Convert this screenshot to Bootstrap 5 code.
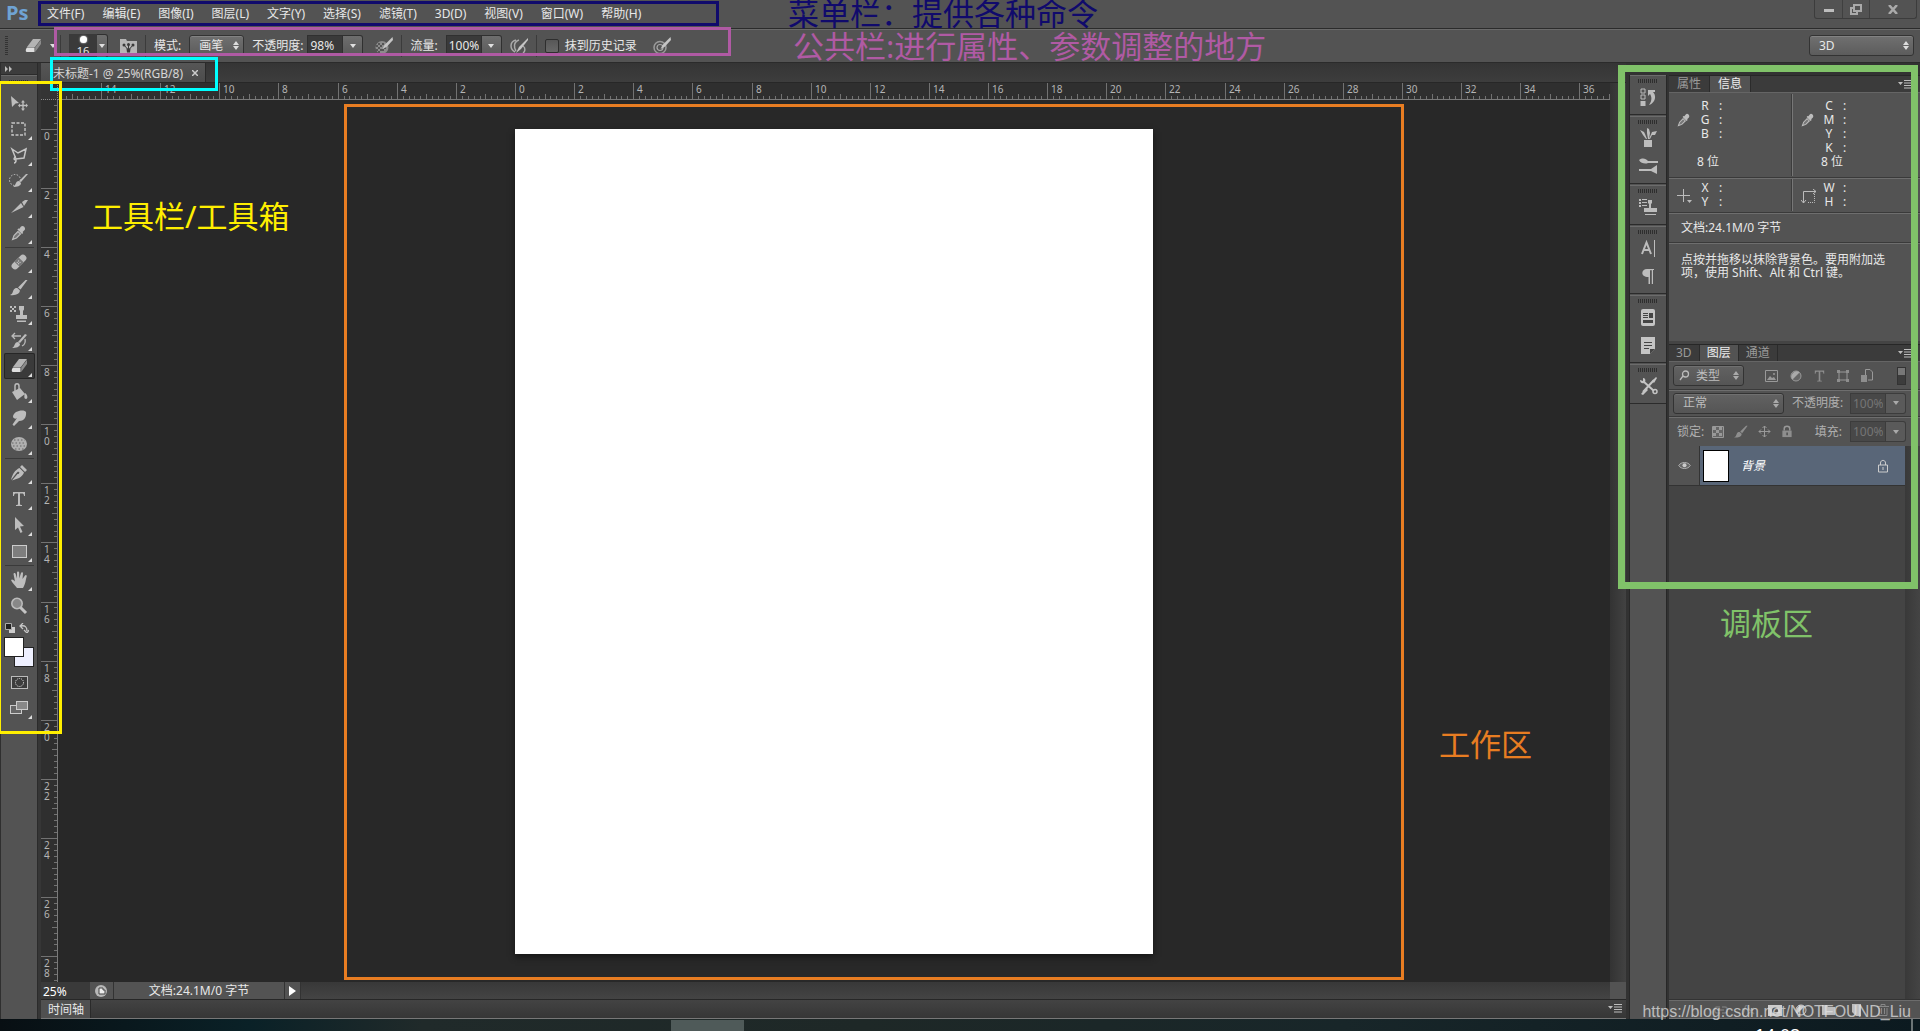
<!DOCTYPE html>
<html lang="zh-CN">
<head>
<meta charset="utf-8">
<meta name="viewport" content="width=device-width, initial-scale=1">
<title>Ps</title>
<link rel="stylesheet" href="https://cdn.jsdelivr.net/npm/bootstrap@5.3.0/dist/css/bootstrap.min.css">
<style>
:root{--face:#535353;--edge:#2b2b2b;--hi:#6a6a6a;--ink:#e8e8e8}
body{font:12px/14px "Noto Sans","Noto Sans CJK SC",sans-serif;color:var(--ink);background:#282828}
button,input,select{font:inherit;color:inherit}
button{background:none;border:0;padding:0}
svg{display:block;flex:none}
.ic{fill:#bdbdbd;stroke:none}
.bar-menu{height:28px;background:var(--face);padding-left:6px}
.ps-logo{font:bold 20px/26px "Open Sans","Noto Sans",sans-serif;color:#6fa3d3;width:41px}
.menu-list{gap:18px}
.menu-list button{line-height:26px;white-space:nowrap}
.win-ctl{border:1px solid #3c3c3c;border-top:0;height:19px;border-radius:0 0 3px 3px;margin-right:3px}
.win-ctl button{width:27px;height:18px;border-left:1px solid #404040}
.win-ctl button:first-child{border:0}
.win-ctl button:last-child{width:47px}
.bar-opt{height:35px;background:var(--face);border-top:1px solid var(--edge);border-bottom:1px solid var(--edge);box-shadow:inset 0 1px 0 var(--hi);padding:2px 6px 2px 5px}
.vsep{width:1px;height:22px;background:#3b3b3b}
.grip-v{width:3px;height:20px;background:repeating-linear-gradient(#333 0 1px,transparent 1px 2px)}
.grip-h{width:20px;height:4px;background:repeating-linear-gradient(90deg,#2e2e2e 0 1px,transparent 1px 2px)}
.ps-select{appearance:none;height:21px;padding:0 16px 0 9px;border:1px solid #333;border-radius:3px;box-shadow:inset 0 1px 0 #828282;line-height:18px;
 background:url("data:image/svg+xml,%3Csvg xmlns='http://www.w3.org/2000/svg' width='6' height='9'%3E%3Cpath fill='%23ddd' d='M3 0l3 4H0zM3 9l3-4H0z'/%3E%3C/svg%3E") no-repeat right 4px center,linear-gradient(#707070,#5c5c5c)}
.w-mode{width:55px}
.w-space{width:105px}
.ps-num{width:36px;height:21px;background:#3a3a3a;border:1px solid #303030;padding:0 2px;border-radius:0}
.ps-drop{width:20px;height:21px;border:1px solid #303030;border-left:0;border-radius:0 3px 3px 0;background:linear-gradient(#6e6e6e,#5a5a5a);display:flex;align-items:center;justify-content:center}
.ps-drop::after,.caret::after{content:"";display:block;border:3px solid transparent;border-top:4px solid #e0e0e0;border-bottom:0}
.brush-well{width:28px;height:24px;background:#3a3a3a;font-size:11px;line-height:12px;padding-top:2px}
.brush-dot{width:7px;height:7px;border-radius:50%;background:#fff;box-shadow:0 0 2px #fff;margin-bottom:2px}
.brush-drop{width:11px;height:24px}
.ps-check{appearance:none;width:14px;height:14px;border:1px solid #2e2e2e;border-radius:2px;background:linear-gradient(#575757,#686868);margin:0 6px 0 0}
.opt-icon{width:18px;height:18px}
.gap-l{margin-left:8px}
.gap-m{margin-left:12px}
.tool-col{width:38px;background:var(--face);border-left:1px solid #2f2f2f;border-right:1px solid var(--edge)}
.tool-head{height:12px;background:#3c3c3c;border-bottom:1px solid var(--edge);padding:3px 0 0 4px}
.tool-grip{height:15px;padding-top:4px;border-top:1px solid #696969}
.tool-b{width:31px;height:26px;position:relative;display:flex;align-items:center;justify-content:center}
.tool-b.more::after{content:"";position:absolute;right:3px;bottom:2px;border:2px solid transparent;border-right-color:#ddd;border-bottom-color:#ddd}
.tool-b.on{background:#3a3a3a;box-shadow:inset 0 0 0 1px #262626;border-radius:2px}
.tool-sep{width:29px;height:1px;background:#3a3a3a;margin:1px 0}
.swatches{width:30px;height:30px;position:relative;margin:4px 0 2px}
.swatches button{position:absolute;width:20px;height:20px;border:1px solid #222}
.swatches .sw-back{right:0;bottom:0;background:#eef0ff}.swatches .sw-fore{left:0;top:0;background:#fff}
.doc-col{background:#3a3a3a;border-left:3px solid #363636;min-width:0}
.tab-strip{height:20px;background:linear-gradient(#353535,#3d3d3d);border-bottom:1px solid #272727}
.doc-tab{background:linear-gradient(#565656,#4c4c4c);border-right:1px solid #2a2a2a;padding:1px 7px 0 12px;gap:9px;line-height:19px;color:#d6d6d6}
.ruler-h{height:17px;border-bottom:1px solid #7a7a7a}
.ruler-v{width:17px;border-right:1px solid #7a7a7a}
.ruler{background:#2f2f2f;overflow:hidden;flex:none}
.ruler text{fill:#b5b5b5;font:10px "Noto Sans",sans-serif}
.ruler path{stroke:#727272;fill:none;shape-rendering:crispEdges}
.corner{width:17px;height:17px;background:#343434;border-right:1px dotted #888;border-bottom:1px dotted #888;flex:none}
.stage{background:#282828;min-width:0}
.paper{width:638px;height:825px;background:#fff;box-shadow:0 3px 6px #161616}
.scroll-v{width:16px;background:linear-gradient(90deg,#333,#424242)}
.status{height:17px;background:linear-gradient(#383838,#444)}
.status .zoom-box{width:49px;background:#3a3a3a;border:0;padding:1px 2px 0;height:17px;color:#fff}
.status button{background:var(--face);border-right:1px solid #333;height:17px;padding-top:1px}
.status .size-info{width:171px}
.status .sb-corner{width:16px;background:var(--face)}
.time-strip{height:20px;border-top:1px solid #272727;border-bottom:1px solid #777;background:linear-gradient(#434343,#363636)}
.time-tab{background:#505050;border-right:1px solid #2a2a2a;padding:1px 6px 0 7px;line-height:18px}
.dock{width:38px;background:var(--face);border-left:1px solid #272727;border-right:1px solid #272727;margin-left:3px}
.dock section{border-top:1px solid #6c6c6c;border-bottom:1px solid #2b2b2b;padding-top:3px;margin-bottom:1px}
.dock button{height:28px;display:flex;align-items:center}
.dock .g-one{height:40px}.dock .g-two{height:68px}
.top-gap{height:12px}
.right{background:#323232}
.panel-col{width:251px;margin-left:2px;background:#444}
.ptabs{height:17px;background:#3b3b3b;border-top:1px solid #272727;color:#9a9a9a;padding-right:8px}
.ptabs button{padding:0 8px;border-right:1px solid #2b2b2b;line-height:16px}
.ptabs.tight{margin-top:3px}
.ptabs.tight button{padding:0 7px}
.ptabs button.on{background:var(--face);color:#eee}
.panel{background:var(--face);border-top:1px solid #656565}
.info-row{padding-right:5px}
.info-cell{height:82px;padding:5px 0 0 8px;margin:1px 0}
.info-cell.small-cell{height:32px;padding-top:2px}
.info-cell + .info-cell{border-left:1px solid #777;box-shadow:-1px 0 0 #3c3c3c}
.info-cell dl{margin:0;width:42px;display:grid;grid-template-columns:14px 1fr;column-gap:6px;text-align:center;align-content:start}
.info-cell dt,.info-cell dd{margin:0;font-weight:400;line-height:14px;height:14px}
.info-cell dd{text-align:left;padding-left:1px}
.info-cell .depth{grid-column:1/3;text-align:left;white-space:nowrap;margin-left:-1px}
.info-cell .lead-ic{width:21px;padding-top:14px}
.rule{border-top:1px solid #3a3a3a;box-shadow:inset 0 1px 0 #6e6e6e}
.doc-size{height:30px;padding:8px 12px}
.hint{height:99px;padding:10px 28px 0 12px;line-height:13px;margin:0}
.dim{color:#b0b0b0}
.lrow{height:27px;padding:0 14px 0 4px}
.lrow.tall{height:30px}
.lrow .ps-select{color:#bdbdbd;box-shadow:inset 0 1px 0 #707070;background-image:url("data:image/svg+xml,%3Csvg xmlns='http://www.w3.org/2000/svg' width='6' height='9'%3E%3Cpath fill='%23aaa' d='M3 0l3 4H0zM3 9l3-4H0z'/%3E%3C/svg%3E"),linear-gradient(#626262,#555)}
.lrow .ps-num{background:#484848;color:#757575;border-color:#3c3c3c}
.lrow .ps-drop{border-color:#3c3c3c;background:#5a5a5a}
.lrow .ps-drop::after{border-top-color:#aaa}
.lrow .ic{fill:#8e8e8e}
.filters{gap:12px;margin-left:21px}
.locks{gap:10px;margin-left:8px}
.w-type{width:71px;padding-left:22px}
.w-blend{width:111px}
.find{position:absolute;left:6px;top:5px}
.toggle-sw{width:9px;height:18px;background:linear-gradient(#777 0 45%,#3c3c3c 45%);border:1px solid #333}
.layer{height:40px;border-bottom:1px solid #333}
.eye{width:31px;background:var(--face);border-right:1px solid #333;display:flex;align-items:center;justify-content:center}
.layer .eye{background:var(--face);border-right:1px solid #333}
.layer-body{background:#596678;padding:0 16px 0 3px}
.thumb{width:26px;height:32px;background:#fff;border:1px solid #000}
.sb{width:15px;background:linear-gradient(90deg,#393939,#444)}
.foot{height:20px;background:var(--face);border-top:1px solid #333;border-bottom:1px solid #777;box-shadow:inset 0 1px 0 #6c6c6c;padding:2px 30px 0 0;gap:13px}
.taskbar{height:12px;background:linear-gradient(90deg,#080f13,#0a2127 13%,#202a2a 22%,#1e2827 45%,#182629 70%,#0c1a20);overflow:hidden}
.task-on{width:73px;height:11px;background:#4f5a59;margin:1px 0 0 671px}
.clock{font:18px/18px "Liberation Sans",sans-serif;margin:8px 111px 0 0;color:#fff}
.peek{width:2px;background:#6c7577;margin-right:7px}
.note{position:absolute;pointer-events:none;z-index:5}
.note-t{font:31px/30px "Noto Sans","Noto Sans CJK SC",sans-serif;white-space:nowrap}
.n-menu{left:38px;top:1px;width:681px;height:25px;border:3px solid #100a6c}
.t-menu{left:788px;top:-2px;color:#100a6c}
.n-opt{left:54px;top:27px;width:677px;height:29px;border:3px solid #b05aa4}
.t-opt{left:793px;top:31px;color:#b05aa4}
.n-tab{left:50px;top:57px;width:168px;height:34px;border:3px solid #0ff}
.n-tool{left:-2px;top:81px;width:64px;height:653px;border:3px solid #ffef00}
.t-tool{left:92px;top:201px;color:#ffef00}
.n-work{left:286px;top:4px;width:1060px;height:876px;border:3px solid #e87d22}
.t-work{right:388px;top:729px;color:#e87d22}
.n-panel{right:2px;top:65px;width:300px;height:524px;border:7px solid #80c269}
.t-panel{right:107px;top:608px;color:#80c269}
.water{right:9px;bottom:9px;font:16px/20px "Liberation Sans",Arial,sans-serif;color:rgba(225,225,225,.75)}
.fit{min-height:0;min-width:0}
</style>
<script src="https://cdn.jsdelivr.net/npm/bootstrap@5.3.0/dist/js/bootstrap.bundle.min.js"></script>
</head>
<body class="vh-100 overflow-hidden d-flex flex-column position-relative">

<svg width="0" height="0" class="position-absolute" aria-hidden="true">
 <symbol id="dropper" viewBox="0 0 16 16"><path d="M10 1.600c2-2 5.200 1.200 3.600 3.400l-2 2 .6 1-1.200 1-4.600-4.400 1-1.200 1 .4z"/><path d="M7 6.500 3 10.500 1.600 14.400 5.500 13 9.500 9z" fill="#777" stroke="#bdbdbd" stroke-width="1.200"/></symbol>
 <symbol id="brush" viewBox="0 0 18 18"><path d="M17.500 1 10.500 10.500 8 8.500 15.500 1z"/><path d="M7.300 9 9.800 11.300c.5 3.400-4 5.500-9.800 4.700 3-1 2.500-3 3.700-5.200.9-1.600 2.400-2.200 3.600-1.800z"/></symbol>
 <symbol id="eraser" viewBox="0 0 18 18"><path d="M9 2h8l-6 8H3z" fill="#b4b4b4"/><path d="M3 10.600h7.500V15H2.600c-1.400-.6-1-3 .4-4.400z" fill="#dedede"/><path d="M11.200 10.600 17 2.800V7l-5.800 8z" fill="#8c8c8c"/></symbol>
 <symbol id="stamp" viewBox="0 0 18 18"><path d="M9 1h5v3.500l-1 1.500v4h4v4H6v-4h4V6L9 4.500zM7 15.500h9V17H7z"/><path d="M0 1h2v2H0zM4 1h2v2H4zM2 3h2v2H2zM0 5h2v2H0zM4 5h2v2H4z"/></symbol>
 <symbol id="pressure" viewBox="0 0 18 18"><circle cx="7" cy="10.500" r="6.500" fill="#8c8c8c"/><path d="M3 6h2v2H3zM7 6h2v2H7zM1 8h2v2H1zM5 8h2v2H5zM3 10h2v2H3zM7 12h2v2H7zM1 12h2v2H1zM5 12h2v2H5zM3 14h2v2H3zM9 10h2v2H9z" fill="#555"/><path d="M17.500 0 9.500 8l-2 4 4-2L18 3z" fill="#c5c5c5"/></symbol>
 <symbol id="target" viewBox="0 0 18 18"><circle cx="7" cy="10.500" r="6" fill="none" stroke="#9a9a9a" stroke-width="1.500"/><circle cx="7" cy="10.500" r="3" fill="none" stroke="#aaa" stroke-width="1.200"/><path d="M17.500 0 9.500 8l-2 4 4-2L18 3z" fill="#c5c5c5"/></symbol>
 <symbol id="lock" viewBox="0 0 12 14"><path d="M1 6h10v7H1z"/><path d="M3 6V4c0-3.500 6-3.500 6 0v2" fill="none" stroke="#999" stroke-width="1.600"/><path d="M5.400 8h1.400v3H5.400z" fill="#444"/></symbol>
 <symbol id="pmenu" viewBox="0 0 14 9"><path d="M0 2h5L2.500 5zM6 0h8v1H6zM6 2.500h8v1H6zM6 5h8v1H6zM6 7.500h8v1H6z"/></symbol>
</svg>

<header>
 <nav class="bar-menu d-flex">
  <span class="ps-logo">Ps</span>
  <div class="menu-list d-flex flex-grow-1">
   <button>文件(F)</button><button>编辑(E)</button><button>图像(I)</button><button>图层(L)</button><button>文字(Y)</button><button>选择(S)</button><button>滤镜(T)</button><button>3D(D)</button><button>视图(V)</button><button>窗口(W)</button><button>帮助(H)</button>
  </div>
  <div class="win-ctl d-flex">
   <button aria-label="最小化"><svg class="ic mx-auto" width="10" height="10"><path d="M0 5h10v3H0z"/></svg></button>
   <button aria-label="还原"><svg class="mx-auto" width="12" height="11" fill="none" stroke="#aaa" stroke-width="2"><path d="M4 1h7v6H4zM7 7v3H1V4h3"/></svg></button>
   <button aria-label="关闭"><svg class="mx-auto" width="10" height="9" stroke="#aaa" stroke-width="2.500"><path d="M1 0l8 9M9 0L1 9"/></svg></button>
  </div>
 </nav>
 <div class="bar-opt d-flex align-items-center">
  <span class="grip-v"></span>
  <svg class="ic ms-3" width="18" height="18"><use href="#eraser"/></svg>
  <button class="caret ps-1 ms-1" aria-label="工具预设"></button>
  <span class="vsep ms-1"></span>
  <div class="brush-well gap-l d-flex flex-column align-items-center"><span class="brush-dot"></span>16</div><button class="ps-drop brush-drop" aria-label="画笔预设"></button>
  <svg class="gap-m" width="17" height="16"><path d="M0 1h6l1 2h10v13H0z" fill="#b5b5b5"/><g fill="#3a3a3a"><circle cx="4" cy="7" r="1.500"/><circle cx="8.500" cy="6.500" r="1.500"/><circle cx="13" cy="7" r="1.500"/><path d="M6.500 10.500h4l-.5 4H7z"/><path d="M4 7l3.500 4M8.500 6v5M13 7l-3.500 4" stroke="#3a3a3a"/></g></svg>
  <span class="vsep mx-2"></span>
  <label for="mode">模式:</label><select id="mode" class="ps-select w-mode gap-l"><option>画笔</option></select>
  <label for="opac" class="ms-2 me-1">不透明度:</label><input id="opac" class="ps-num" value="98%"><button class="ps-drop" aria-label="不透明度"></button>
  <svg class="opt-icon gap-m"><use href="#pressure"/></svg>
  <span class="vsep mx-2"></span>
  <label for="flow" class="me-2">流量:</label><input id="flow" class="ps-num" value="100%"><button class="ps-drop" aria-label="流量"></button>
  <svg class="opt-icon gap-l" viewBox="0 0 18 18"><path d="M6 3c-7 2-6 9-1 12M9 3c-6 2-5 8-3 11M13 9c3 2 2 6 0 7" fill="none" stroke="#aaa" stroke-width="1.500"/><path d="M18 1 9 10l-3 6 5-4 7-9z" fill="#c5c5c5"/></svg>
  <span class="vsep mx-2"></span>
  <input type="checkbox" class="ps-check" id="hist"><label for="hist">抹到历史记录</label>
  <svg class="opt-icon ms-3"><use href="#target"/></svg>
  <select class="ps-select w-space ms-auto" aria-label="工作区"><option>3D</option></select>
 </div>
</header>

<main class="d-flex flex-grow-1 fit">
 <aside class="tool-col flex-shrink-0">
  <div class="tool-head"><svg class="ic" width="8" height="6"><path d="M0 0l3 3-3 3zM4 0l3 3-3 3z"/></svg></div>
  <div class="tool-grip d-flex justify-content-center"><span class="grip-h"></span></div>
  <div class="d-flex flex-column align-items-center">
   <button class="tool-b" aria-label="移动"><svg class="ic" width="18" height="16"><path d="M1 1l8 7-3.500.5L2 12z"/><path d="M13 5l2 2.500h-1.300V9.700H16V8.400L18 10.500 16 12.500v-1.300h-2.300v2.300H15L13 16l-2-2.500h1.300v-2.300H10v1.300L8 10.500l2-2.100v1.300h2.300V7.500H11z"/></svg></button>
   <button class="tool-b more" aria-label="选框"><svg width="16" height="15"><rect x="1" y="1" width="13" height="12" fill="none" stroke="#c6c6c6" stroke-width="1.400" stroke-dasharray="3 1.500"/></svg></button>
   <button class="tool-b more" aria-label="套索"><svg width="18" height="17"><path d="M2 2l6 4 8-4-2 9-8 1zM6 10c-2 0-3 3 0 3 0 2-1 3-2 3" fill="none" stroke="#c6c6c6" stroke-width="1.500"/></svg></button>
   <button class="tool-b more" aria-label="快速选择"><svg width="20" height="16" class="ic"><circle cx="6" cy="7" r="5.500" fill="none" stroke="#c6c6c6" stroke-dasharray="1.500 1.500"/><path d="M19 1l-7 8-2-1 7-7zM10 8l2 2c0 3-4 4-8 4 3-1 2-6 6-6z"/></svg></button>
   <button class="tool-b more" aria-label="切片"><svg class="ic" width="18" height="16"><path d="M12 3l3-2 3 0-4 6zM11 4l2.500 4L1 14z"/></svg></button>
   <button class="tool-b more" aria-label="吸管"><svg class="ic" width="16" height="16"><use href="#dropper"/></svg></button>
   <span class="tool-sep"></span>
   <button class="tool-b more" aria-label="修复"><svg width="18" height="18"><g transform="rotate(-45 9 9)"><rect x="0" y="5.500" width="18" height="7" rx="3.500" fill="#bcbcbc"/><path d="M6 5.500h6v7H6z" fill="#777"/><path d="M7 8h4M7 10h4" stroke="#ddd" stroke-dasharray="1 1"/></g></svg></button>
   <button class="tool-b more" aria-label="画笔"><svg class="ic" width="18" height="18"><use href="#brush"/></svg></button>
   <button class="tool-b more" aria-label="图章"><svg class="ic" width="18" height="18"><use href="#stamp"/></svg></button>
   <button class="tool-b more" aria-label="历史画笔"><svg class="ic" width="18" height="18"><path d="M17 4l-7 8-2-1 7-8zM8 11l2 2c0 3-4 4-8 4 3-1 2-6 6-6z"/><path d="M3 5h8M5 2L2 5l3 3M15 8c1 4-1 6-3 7" fill="none" stroke="#bbb" stroke-width="1.300"/></svg></button>
   <button class="tool-b more on" aria-label="橡皮擦"><svg width="18" height="18"><use href="#eraser"/></svg></button>
   <button class="tool-b more" aria-label="油漆桶"><svg class="ic" width="18" height="18"><path d="M2 9l8-4 5 6-8 6zM15 10c3 2 3 6 1 6s-2-3-1-6z"/><path d="M5 9V3c0-3 4-3 4 0v5" fill="none" stroke="#bbb" stroke-width="1.500"/></svg></button>
   <button class="tool-b more" aria-label="涂抹"><svg class="ic" width="18" height="18"><path d="M3 8c0-7 12-8 13-5 .6 4-1 9-7 9l-5 5-1.500-1.500L7 9c-1 1-3 1-4-1z"/></svg></button>
   <button class="tool-b more" aria-label="海绵"><svg width="18" height="16"><ellipse cx="9" cy="8" rx="8" ry="7" fill="#b0b0b0"/><g stroke="#666" stroke-dasharray="1.500 2"><path d="M4 4h11M2 7h14M3 10h13M5 13h9"/></g></svg></button>
   <span class="tool-sep"></span>
   <button class="tool-b more" aria-label="钢笔"><svg class="ic" width="18" height="18"><path d="M12 1l5 5-2 2-5-5zM9.500 4l4.500 4.500c-2 5-6 6-12 8L7.500 10l1 0 1-1.500-1.500-1-1.500 1.500-5.500 7C2.500 10 5 6 9.500 4z"/></svg></button>
   <button class="tool-b more" aria-label="文字"><svg class="ic" width="14" height="14"><path d="M1 0h12v4h-1c0-2-1-2.500-2-2.500H8V12c0 .8.500 1 2 1v1H4v-1c1.500 0 2-.2 2-1V1.500H4C3 1.500 2 2 2 4H1z"/></svg></button>
   <button class="tool-b more" aria-label="路径选择"><svg class="ic" width="11" height="17"><path d="M1 0l9 9-4 .5L8.500 15l-2 1L4 10.500 1 13z"/></svg></button>
   <button class="tool-b more" aria-label="矩形"><svg width="15" height="13"><rect x=".5" y=".5" width="14" height="12" fill="#7e7e7e" stroke="#ccc"/></svg></button>
   <span class="tool-sep"></span>
   <button class="tool-b more" aria-label="抓手"><svg class="ic" width="18" height="18"><path d="M7 17c-2-3-5-5-6-8 1-1.500 3 0 4 1.500L3.500 3c0-1.500 2-1.500 2.200 0L7 7.500V1.500c0-1.500 2-1.500 2.200 0v6L11 2c.4-1.400 2.200-1 2 .5L12.500 8 15 4.500c.8-1.200 2.200-.2 1.700 1C15.500 9 16 12 13 17z"/></svg></button>
   <button class="tool-b" aria-label="缩放"><svg width="18" height="18"><circle cx="7" cy="6.500" r="5.200" fill="#888" stroke="#bbb" stroke-width="1.600"/><path d="M10.500 10.500l5.500 5.500" stroke="#c4c4c4" stroke-width="3"/></svg></button>
   <div class="d-flex justify-content-between w-100 px-1 mt-1"><svg width="10" height="10"><path d="M4 4h6v6H4z" fill="#ccc"/><path d="M.5.500h6v6h-6z" fill="#222" stroke="#aaa"/></svg><svg class="me-1" width="10" height="10"><path d="M2 3c4-1 6 1 6 5M4 0L1 3l3 3M5 7l3 3 2-3" fill="none" stroke="#c6c6c6" stroke-width="1.300"/></svg></div>
   <div class="swatches"><button class="sw-back" aria-label="背景色"></button><button class="sw-fore" aria-label="前景色"></button></div>
   <button class="tool-b" aria-label="快速蒙版"><svg width="17" height="13"><rect x=".5" y=".5" width="16" height="12" fill="#3c3c3c" stroke="#bbb"/><circle cx="8.500" cy="6.500" r="4" fill="none" stroke="#eee" stroke-dasharray="1 1"/></svg></button>
   <button class="tool-b more" aria-label="屏幕模式"><svg width="18" height="14"><rect x=".5" y="4.500" width="11" height="8" fill="#666" stroke="#ccc"/><rect x="6.500" y=".5" width="11" height="8" fill="#888" stroke="#ccc"/></svg></button>
  </div>
 </aside>

 <section class="doc-col d-flex flex-column flex-grow-1">
  <div class="tab-strip d-flex"><div class="doc-tab d-flex"><span>未标题-1 @ 25%(RGB/8)</span><button aria-label="关闭文档"><svg width="6" height="6" stroke="#ccc" stroke-width="1.500"><path d="M0 0l6 6M6 0L0 6"/></svg></button></div></div>
  <div class="d-flex flex-grow-1 fit">
   <div class="d-flex flex-column flex-grow-1 fit">
    <div class="d-flex"><span class="corner"></span><div class="ruler ruler-h flex-grow-1 fit"><svg id="rh" width="100%" height="16"></svg></div></div>
    <div class="d-flex flex-grow-1 fit">
     <div class="ruler ruler-v"><svg id="rv" width="16" height="100%"></svg></div>
     <div class="stage flex-grow-1 d-flex align-items-center justify-content-center position-relative">
      <div class="paper flex-shrink-0" id="paper"></div>
      <div class="note n-work"></div>
     </div>
    </div>
   </div>
   <div class="scroll-v"></div>
  </div>
  <div class="status d-flex">
   <input class="zoom-box" value="25%" aria-label="缩放比例">
   <button class="px-1" aria-label="导出"><svg width="15" height="12"><circle cx="7" cy="6" r="6" fill="#b8b8b8"/><path d="M5 3h4v2h2v4H5z" fill="#eee" stroke="#444"/></svg></button>
   <button class="size-info">文档:24.1M/0 字节</button>
   <button class="px-1" aria-label="状态菜单"><svg width="7" height="10"><path d="M0 0l7 5-7 5z" fill="#fff"/></svg></button>
   <span class="sb-corner ms-auto"></span>
  </div>
  <div class="time-strip d-flex"><button class="time-tab">时间轴</button><svg class="ic ms-auto me-1 mt-1" width="14" height="9"><use href="#pmenu"/></svg></div>
 </section>

 <div class="right d-flex flex-shrink-0">
  <div class="d-flex flex-column"><div class="top-gap"></div>
  <nav class="dock flex-grow-1 d-flex flex-column">
   <section class="g-one d-flex flex-column align-items-center"><span class="grip-h"></span><button aria-label="历史记录"><svg class="ic" width="16" height="18"><path d="M1 1h4v4H1zM1 7h4v4H1z" fill="none" stroke="#bbb"/><path d="M.5 13h5v5h-5zM8 2h7v2l-2 0c4 4 2 11-4 13 3-4 3-8 1-11L8 8z"/></svg></button></section>
   <section class="g-two d-flex flex-column align-items-center"><span class="grip-h"></span><button aria-label="画笔预设"><svg class="ic" width="17" height="20"><path d="M4 12h8v7H4zM0 2l4 2 1 2 2 5H6L3 7zM7 0l2 1 1 4-1 6H8L7 5zM12 4l5-1-2 4-3 0-2 4H9z"/></svg></button><button aria-label="画笔"><svg class="ic" width="19" height="18"><path d="M0 3c4-3 7-1 9 1h10v2H9C7 7 2 7 0 3zM0 12h12l6-4v9l-6-3H0z"/></svg></button></section>
   <section class="g-one d-flex flex-column align-items-center"><span class="grip-h"></span><button aria-label="仿制源"><svg class="ic" width="19" height="18"><path d="M0 1h2v2H0zM3 1h5v1H3zM0 4h2v2H0zM3 4h5v1H3zM0 7h2v2H0zM3 7h5v1H3zM9 2h4v3l-1 1v4h6v4H5v-4h5V6L9 5zM6 16h11v1H6z"/></svg></button></section>
   <section class="g-two d-flex flex-column align-items-center"><span class="grip-h"></span><button aria-label="字符"><svg width="15" height="17"><path d="M1 14L5.500 2.500 10 14M2.500 10h6" fill="none" stroke="#bdbdbd" stroke-width="2"/><path d="M13.500 0v17" stroke="#bdbdbd"/></svg></button><button aria-label="段落"><svg class="ic" width="12" height="15"><path d="M5 0h7v1h-1v14h-1.200V1.200H8V15H6.500V8C-2 8-1 0 5 0z"/></svg></button></section>
   <section class="g-two d-flex flex-column align-items-center"><span class="grip-h"></span><button aria-label="注释"><svg width="14" height="17"><rect width="14" height="17" rx="2" fill="#c4c4c4"/><path d="M2 4h5v1H2zM2 6h5v1H2zM2 8h5v1H2zM8 4h4v5H8zM2 11h10v3H2z" fill="#444"/></svg></button><button aria-label="便笺"><svg width="14" height="17"><path d="M0 0h14v12l-5 5H0z" fill="#c4c4c4"/><path d="M3 5h8v1H3zM3 8h8v1H3zM3 11h5v1H3zM9 17v-5h5z" fill="#444"/></svg></button></section>
   <section class="g-one d-flex flex-column align-items-center"><span class="grip-h"></span><button aria-label="工具预设"><svg width="19" height="18"><path d="M4 4l11 10M15 3L4 15" stroke="#c4c4c4" stroke-width="2"/><path d="M1 3c0 4 4 4 5 2s0-4-2-4v3zM2 17l5-6 2 2-5 5zM13 4l4-4 1 1-3 5z" fill="#c4c4c4"/><circle cx="16" cy="14.500" r="2" fill="none" stroke="#c4c4c4" stroke-width="1.500"/></svg></button></section>
  </nav></div>
  <div class="d-flex flex-column"><div class="top-gap"></div>
  <div class="panel-col flex-grow-1 d-flex flex-column">
   <div class="ptabs d-flex"><button>属性</button><button class="on">信息</button><svg class="ic ms-auto mt-1" width="14" height="9"><use href="#pmenu"/></svg></div>
   <div class="panel">
    <div class="info-row d-flex">
     <div class="info-cell d-flex w-50"><span class="lead-ic"><svg class="ic" width="14" height="14"><use href="#dropper"/></svg></span><dl><dt>R</dt><dd>:</dd><dt>G</dt><dd>:</dd><dt>B</dt><dd>:</dd><dt>&nbsp;</dt><dd></dd><dt class="depth">8 位</dt></dl></div>
     <div class="info-cell d-flex w-50"><span class="lead-ic"><svg class="ic" width="14" height="14"><use href="#dropper"/></svg></span><dl><dt>C</dt><dd>:</dd><dt>M</dt><dd>:</dd><dt>Y</dt><dd>:</dd><dt>K</dt><dd>:</dd><dt class="depth">8 位</dt></dl></div>
    </div>
    <div class="rule info-row d-flex">
     <div class="info-cell small-cell d-flex w-50"><span class="lead-ic pt-2"><svg width="16" height="14"><path d="M6.500 0v13M0 6.500h13" stroke="#bbb"/><path d="M10 11h5l-2.500 3z" fill="#bbb"/></svg></span><dl><dt>X</dt><dd>:</dd><dt>Y</dt><dd>:</dd></dl></div>
     <div class="info-cell small-cell d-flex w-50"><span class="lead-ic pt-2"><svg width="16" height="15"><path d="M2.500 14V2.500H15M12 0l3 2.500L12 5M0 11l2.500 3L5 11" fill="none" stroke="#bbb"/><path d="M13.500 5v8.500H6" fill="none" stroke="#bbb" stroke-dasharray="1 1"/></svg></span><dl><dt>W</dt><dd>:</dd><dt>H</dt><dd>:</dd></dl></div>
    </div>
    <div class="rule doc-size">文档:24.1M/0 字节</div>
    <p class="rule hint">点按并拖移以抹除背景色。要用附加选项，使用 Shift、Alt 和 Ctrl 键。</p>
   </div>
   <div class="ptabs tight d-flex"><button>3D</button><button class="on">图层</button><button>通道</button><svg class="ic ms-auto mt-1" width="14" height="9"><use href="#pmenu"/></svg></div>
   <div class="panel dim">
    <div class="lrow d-flex align-items-center">
     <div class="position-relative"><select class="ps-select w-type" aria-label="筛选"><option>类型</option></select><svg class="find" width="11" height="11" fill="none" stroke="#bbb" stroke-width="1.300"><circle cx="6.500" cy="4" r="3"/><path d="M4 6l-3 4"/></svg></div>
     <div class="filters d-flex align-items-center">
      <svg width="13" height="12"><path d="M.5.500h12v11H.5z" fill="none" stroke="#999"/><path d="M2 10l3-4 2 2 2-1 2 3z" fill="#999"/><circle cx="9" cy="4" r="1" fill="#999"/></svg>
      <svg width="12" height="12"><circle cx="6" cy="6" r="5" fill="#666" stroke="#999"/><path d="M2.500 9.500A5 5 0 0 1 9.500 2.500z" fill="#aaa"/></svg>
      <svg class="ic" width="11" height="12" viewBox="0 0 14 14"><path d="M1 0h12v4h-1c0-2-1-2.500-2-2.500H8V12c0 .8.500 1 2 1v1H4v-1c1.500 0 2-.2 2-1V1.500H4C3 1.500 2 2 2 4H1z"/></svg>
      <svg class="ic" width="12" height="12"><path d="M2 2h8v8H2z" fill="none" stroke="#999"/><path d="M0 0h3v3H0zM9 0h3v3H9zM0 9h3v3H0zM9 9h3v3H9z"/></svg>
      <svg class="ic" width="12" height="13"><path d="M4.500 6V.5H9l2.500 2.500v8H7" fill="none" stroke="#999"/><path d="M0 6h6v7H0z"/></svg>
     </div>
     <span class="toggle-sw ms-auto"></span>
    </div>
    <div class="lrow rule d-flex align-items-center"><select class="ps-select w-blend" aria-label="混合模式"><option>正常</option></select><label for="lop" class="ms-2">不透明度:</label><input class="ps-num ms-auto" id="lop" value="100%"><button class="ps-drop" aria-label="图层不透明度"></button></div>
    <div class="lrow tall rule d-flex align-items-center">
     <span class="ms-1">锁定:</span>
     <div class="locks d-flex align-items-center">
      <svg width="12" height="12"><path d="M.5.500h11v11H.5z" fill="#666" stroke="#999"/><path d="M1 1h3v3H1zM7 1h3v3H7zM4 4h3v3H4zM1 7h3v3H1zM7 7h3v3H7z" fill="#999"/></svg>
      <svg class="ic" width="14" height="14"><use href="#brush"/></svg>
      <svg width="13" height="13" fill="none" stroke="#999"><path d="M6.500 1v11M1 6.500h11M4.500 3l2-2 2 2M4.500 10l2 2 2-2M3 4.500l-2 2 2 2M10 4.500l2 2-2 2"/></svg>
      <svg class="ic" width="12" height="13"><use href="#lock"/></svg>
     </div>
     <label for="lfill" class="ms-auto me-2">填充:</label><input class="ps-num" id="lfill" value="100%"><button class="ps-drop" aria-label="填充"></button>
    </div>
   </div>
   <div class="d-flex flex-grow-1">
    <div class="flex-grow-1">
     <div class="layer d-flex">
      <button class="eye" aria-label="可见性"><svg width="13" height="9"><path d="M.7 4.500C3 .5 10 .5 12.300 4.500 10 8.500 3 8.500.7 4.500z" fill="#666" stroke="#b0b0b0"/><circle cx="6.500" cy="4.300" r="2" fill="#ccc"/></svg></button>
      <div class="layer-body flex-grow-1 d-flex align-items-center"><span class="thumb"></span><em class="gap-m text-white">背景</em><svg class="ms-auto" width="12" height="14" fill="none" stroke="#ccc"><path d="M1.500 6h9v7h-9zM3.500 6V4c0-3.500 5-3.500 5 0v2M6 8v3"/></svg></div>
     </div>
    </div>
    <div class="sb"></div>
   </div>
   <div class="foot d-flex justify-content-end align-items-center">
    <svg width="14" height="8" fill="none" stroke="#777" stroke-width="1.500"><path d="M6 1H3C0 1 0 7 3 7h3M8 1h3c3 0 3 6 0 6H8M4 4h6"/></svg>
    <svg width="14" height="10" fill="none" stroke="#777" stroke-width="1.500"><path d="M6 0C3 0 4 9 1 9M1 4h5M7 3l6 6M13 3L7 9"/></svg>
    <svg width="14" height="11"><path d="M0 0h14v11H0z" fill="#ccc"/><circle cx="7" cy="5.500" r="3" fill="#555"/></svg>
    <svg width="14" height="12"><circle cx="6" cy="6" r="5" fill="#555" stroke="#ccc"/><path d="M2.500 9.500A5 5 0 0 1 9.500 2.500z" fill="#ccc"/></svg>
    <svg class="ic" width="14" height="12"><path d="M0 1h5l1 2h7v8H0z"/></svg>
    <svg class="ic" width="14" height="12"><path d="M3 0h9v12H7L3 8z"/></svg>
    <svg width="14" height="12" fill="none" stroke="#888"><path d="M1 2.500h12M5 2V.5h4V2M3 4v7.500h8V4M5.500 4v6M8.500 4v6"/></svg>
   </div>
  </div></div>
 </div>
</main>

<footer class="taskbar d-flex flex-shrink-0"><span class="task-on"></span><span class="clock ms-auto">14:08</span><span class="peek"></span></footer>

<div class="note n-menu"></div><div class="note note-t t-menu">菜单栏：提供各种命令</div>
<div class="note n-opt"></div><div class="note note-t t-opt">公共栏:进行属性、参数调整的地方</div>
<div class="note n-tab"></div>
<div class="note n-tool"></div><div class="note note-t t-tool">工具栏/工具箱</div>
<div class="note note-t t-work">工作区</div>
<div class="note n-panel"></div><div class="note note-t t-panel">调板区</div>
<div class="note water">https://blog.csdn.net/NOTFOUND_Liu</div>

<script>
// Draw both rulers with their zero on the paper's top left corner: a label every 2 cm, ten ticks between labels.
const step = 59.13;
function drawRulers() {
  const paper = document.getElementById('paper').getBoundingClientRect();
  for (const [id, vertical] of [['rh', false], ['rv', true]]) {
    const svg = document.getElementById(id), box = svg.getBoundingClientRect();
    const zero = vertical ? paper.top - box.top : paper.left - box.left;
    const length = vertical ? box.height : box.width, depth = 16;
    let d = '', labels = '';
    for (let k = Math.ceil(-zero / step * 10); zero + k * step / 10 < length; k++) {
      const p = Math.round(zero + k * step / 10) + 0.5;
      const size = k % 10 === 0 ? depth : k % 5 === 0 ? 5 : 3;
      d += vertical ? `M${depth - size} ${p}H${depth}` : `M${p} ${depth - size}V${depth}`;
      if (k % 10 === 0) {
        const value = String(Math.abs(k / 5));
        if (vertical) labels += `<text y="${Math.round(p + 10)}">${[...value].map((c, i) => `<tspan x="3" dy="${i * 10}">${c}</tspan>`).join('')}</text>`;
        else labels += `<text x="${Math.round(p + 3)}" y="10">${value}</text>`;
      }
    }
    svg.innerHTML = `<path d="${d}"/>${labels}`;
  }
}
drawRulers();
addEventListener('resize', drawRulers);
</script>
</body>
</html>
